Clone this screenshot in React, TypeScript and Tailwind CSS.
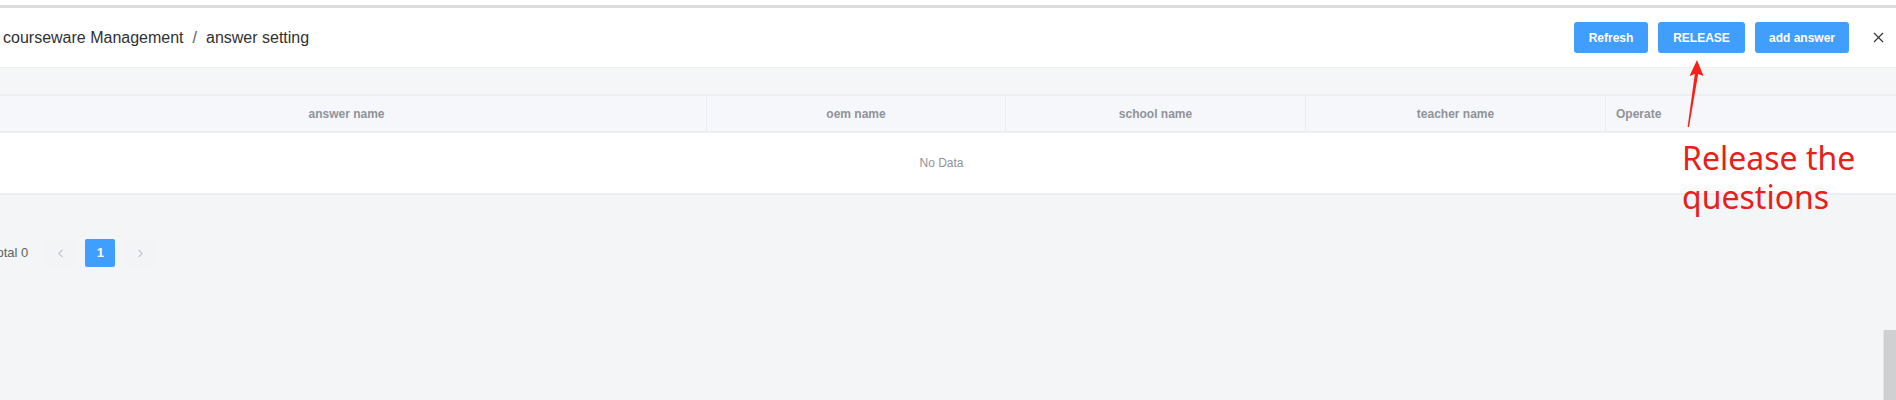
import { X, ChevronLeft, ChevronRight } from "lucide-react";

const columns = [
  { label: "answer name", width: "w-[720px]", align: "justify-center" },
  { label: "oem name", width: "w-[299px]", align: "justify-center" },
  { label: "school name", width: "w-[300px]", align: "justify-center" },
  { label: "teacher name", width: "w-[300px]", align: "justify-center" },
  { label: "Operate", width: "flex-1", align: "justify-start pl-[10px]" },
];

function HeaderButton({ label, width }: { label: string; width: string }) {
  return (
    <button
      type="button"
      className={`h-[31px] ${width} rounded-[3px] bg-[#409eff] text-[12px] font-bold text-white`}
    >
      {label}
    </button>
  );
}

export default function App() {
  return (
    <div className="relative h-[400px] w-full overflow-hidden bg-[#f4f5f7] font-['Liberation_Sans',Arial,sans-serif]">
      {/* top strip */}
      <div className="h-[5px] bg-white" />
      <div className="h-[3px] bg-[#dcdcdc]" />

      <div className="-ml-[15px] w-[calc(100%+15px)]">
        {/* header */}
        <div className="flex h-[60px] items-center justify-between border-b border-[#eceef2] bg-white pl-[18px] pr-[9px]">
          <div className="flex items-center text-[16px] text-[#303133]">
            <span>courseware Management</span>
            <span className="mx-[9px] text-[#5a5e66]">/</span>
            <span>answer setting</span>
          </div>
          <div className="flex items-center">
            <div className="flex items-center gap-[10px]">
              <HeaderButton label="Refresh" width="w-[74px]" />
              <HeaderButton label="RELEASE" width="w-[87px]" />
              <HeaderButton label="add answer" width="w-[94px]" />
            </div>
            <X className="ml-[21px] h-[17px] w-[17px] text-[#303133]" strokeWidth={1.6} />
          </div>
        </div>

        {/* spacer band */}
        <div className="h-[26px] bg-[#f5f6f8]" />

        {/* table */}
        <div className="ml-[2px]">
          <div className="flex h-[39px] border-y-2 border-[#ebeef5] bg-[#f5f7fa] text-[12px] font-bold text-[#909399]">
            {columns.map((col, i) => (
              <div
                key={col.label}
                className={`flex ${col.width} ${col.align} items-center ${
                  i < columns.length - 1 ? "border-r border-[#ebeef5]" : ""
                }`}
              >
                {col.label}
              </div>
            ))}
          </div>
          <div className="flex h-[62px] items-center justify-center border-b-2 border-[#ebeef5] bg-white text-[12px] text-[#909399]">
            No Data
          </div>
        </div>

        {/* pagination */}
        <div className="mt-[44px] flex h-[28px] items-center pl-[5px] text-[13px] text-[#606266]">
          <span className="mr-[12px]">Total 0</span>
          <button
            type="button"
            className="mx-[5px] flex h-[28px] w-[30px] items-center justify-center rounded-[2px] bg-[#f3f4f6] text-[#c0c4cc]"
          >
            <ChevronLeft className="h-[13px] w-[13px]" strokeWidth={2} />
          </button>
          <button
            type="button"
            className="mx-[5px] flex h-[28px] w-[30px] items-center justify-center rounded-[2px] bg-[#409eff] font-bold text-white"
          >
            1
          </button>
          <button
            type="button"
            className="mx-[5px] flex h-[28px] w-[30px] items-center justify-center rounded-[2px] bg-[#f3f4f6] text-[#c0c4cc]"
          >
            <ChevronRight className="h-[13px] w-[13px]" strokeWidth={2} />
          </button>
        </div>
      </div>

      {/* annotation arrow */}
      <svg
        className="pointer-events-none absolute left-0 top-0"
        width="1896"
        height="400"
        viewBox="0 0 1896 400"
      >
        <path
          d="M1697 60 L1703.5 76 L1698.2 74 L1689 127 L1687.6 127 L1694.8 74 L1689.5 76 Z"
          fill="#f5221b"
        />
      </svg>

      {/* annotation text */}
      <div className="absolute left-[1682px] top-[138px] font-['Noto_Sans','Open_Sans',sans-serif] text-[32px] leading-[39px] text-[#e8201a]">
        Release the
        <br />
        questions
      </div>

      {/* scrollbar thumb */}
      <div className="absolute right-0 top-[330px] h-[70px] w-[13px] border-l border-[#e2e3e5] bg-[#cfd0d2]" />
    </div>
  );
}
